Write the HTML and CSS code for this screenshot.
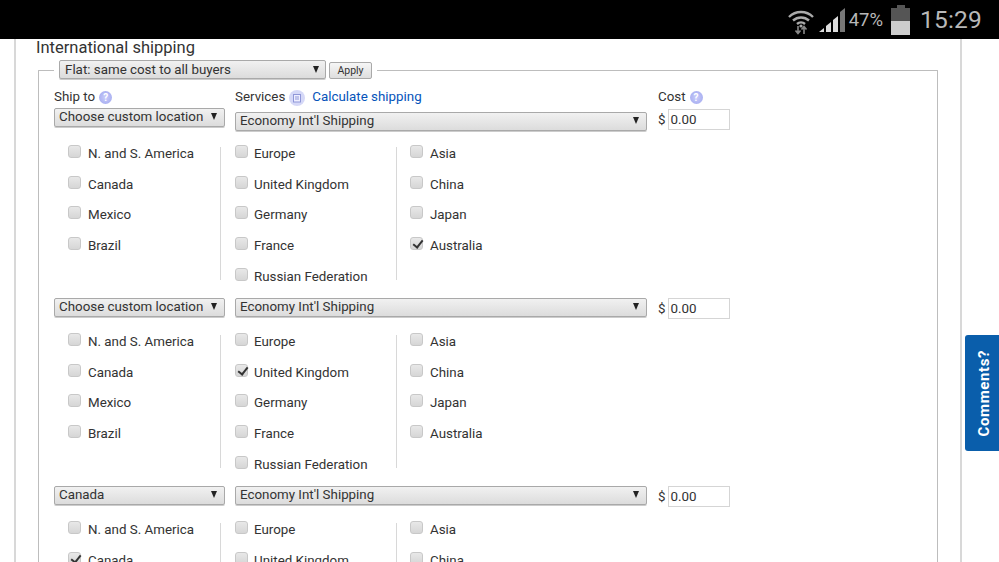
FILE: index.html
```html
<!DOCTYPE html>
<html lang="en">
<head>
<meta charset="utf-8">
<title>International shipping</title>
<link rel="stylesheet" href="styles.css">
</head>
<body>
<header class="status">
  <svg class="wifi" width="28" height="30" viewBox="0 0 28 30">
    <path d="M2 11 A17 17 0 0 1 26 11" class="arc"/>
    <path d="M6 14.5 A12 12 0 0 1 22 14.5" class="arc"/>
    <path d="M10 18 A6 6 0 0 1 18 18" class="arc"/>
    <circle cx="14" cy="20" r="1.6" fill="#aaa"/>
    <path d="M11 20v7M8.5 24.5L11 27.5L13.500 24.500M17 28v-7M14.500 23.500L17 20.500L19.500 23.500" class="arrows"/>
  </svg>
  <svg class="signal" width="26" height="26" viewBox="0 0 26 26">
    <path d="M0 25l5-4v4z" fill="#ddd"/>
    <path d="M7 25v-6l5-4v10z" fill="#ddd"/>
    <path d="M14 25v-12l5-4v16z" fill="#ddd"/>
    <path d="M21 25v-20l5-4v24z" fill="#777"/>
  </svg>
  <span class="pct">47%</span>
  <svg class="batt" width="20" height="30" viewBox="0 0 20 30">
    <path d="M6 0h8v3h5v13h-19v-13h6z" fill="#555"/>
    <rect y="16" width="19" height="14" fill="#ccc"/>
  </svg>
  <span class="time">15:29</span>
</header>

<main class="page">
  <h2 class="title">International shipping</h2>
  <section class="box">
    <div class="legend">
      <div class="sel sel-flat"><span>Flat: same cost to all buyers</span><i class="arrow"></i></div>
      <button class="apply" type="button">Apply</button>
    </div>

    <div class="cols heads">
      <div class="head">Ship to <span class="help">?</span></div>
      <div class="head">Services
        <svg class="calc" width="16" height="16" viewBox="0 0 16 16"><circle cx="8" cy="8" r="8" fill="#d5d8f7"/><rect x="4.500" y="4.500" width="7" height="7.500" fill="#eef" stroke="#8f97d8"/><path d="M6 7h4M6 9h4" stroke="#8f97d8"/></svg>
        <a class="link">Calculate shipping</a></div>
      <div class="head">Cost <span class="help">?</span></div>
    </div>

    <div class="cols controls first">
      <div class="sel sel-loc"><span>Choose custom location</span><i class="arrow"></i></div>
      <div class="sel sel-svc"><span>Economy Int'l Shipping</span><i class="arrow"></i></div>
      <div class="cost">$ <span class="input">0.00</span></div>
    </div>
    <div class="regions">
      <div class="region r1">
        <label class="opt"><i class="cb"></i>N. and S. America</label>
        <label class="opt"><i class="cb"></i>Canada</label>
        <label class="opt"><i class="cb"></i>Mexico</label>
        <label class="opt"><i class="cb"></i>Brazil</label>
      </div>
      <div class="region r2">
        <label class="opt"><i class="cb"></i>Europe</label>
        <label class="opt"><i class="cb"></i>United Kingdom</label>
        <label class="opt"><i class="cb"></i>Germany</label>
        <label class="opt"><i class="cb"></i>France</label>
        <label class="opt"><i class="cb"></i>Russian Federation</label>
      </div>
      <div class="region r3">
        <label class="opt"><i class="cb"></i>Asia</label>
        <label class="opt"><i class="cb"></i>China</label>
        <label class="opt"><i class="cb"></i>Japan</label>
        <label class="opt"><i class="cb on"></i>Australia</label>
      </div>
    </div>

    <div class="cols controls">
      <div class="sel sel-loc"><span>Choose custom location</span><i class="arrow"></i></div>
      <div class="sel sel-svc"><span>Economy Int'l Shipping</span><i class="arrow"></i></div>
      <div class="cost">$ <span class="input">0.00</span></div>
    </div>
    <div class="regions">
      <div class="region r1">
        <label class="opt"><i class="cb"></i>N. and S. America</label>
        <label class="opt"><i class="cb"></i>Canada</label>
        <label class="opt"><i class="cb"></i>Mexico</label>
        <label class="opt"><i class="cb"></i>Brazil</label>
      </div>
      <div class="region r2">
        <label class="opt"><i class="cb"></i>Europe</label>
        <label class="opt"><i class="cb on"></i>United Kingdom</label>
        <label class="opt"><i class="cb"></i>Germany</label>
        <label class="opt"><i class="cb"></i>France</label>
        <label class="opt"><i class="cb"></i>Russian Federation</label>
      </div>
      <div class="region r3">
        <label class="opt"><i class="cb"></i>Asia</label>
        <label class="opt"><i class="cb"></i>China</label>
        <label class="opt"><i class="cb"></i>Japan</label>
        <label class="opt"><i class="cb"></i>Australia</label>
      </div>
    </div>

    <div class="cols controls">
      <div class="sel sel-loc"><span>Canada</span><i class="arrow"></i></div>
      <div class="sel sel-svc"><span>Economy Int'l Shipping</span><i class="arrow"></i></div>
      <div class="cost">$ <span class="input">0.00</span></div>
    </div>
    <div class="regions">
      <div class="region r1">
        <label class="opt"><i class="cb"></i>N. and S. America</label>
        <label class="opt"><i class="cb on"></i>Canada</label>
        <label class="opt"><i class="cb"></i>Mexico</label>
        <label class="opt"><i class="cb"></i>Brazil</label>
      </div>
      <div class="region r2">
        <label class="opt"><i class="cb"></i>Europe</label>
        <label class="opt"><i class="cb"></i>United Kingdom</label>
        <label class="opt"><i class="cb"></i>Germany</label>
        <label class="opt"><i class="cb"></i>France</label>
        <label class="opt"><i class="cb"></i>Russian Federation</label>
      </div>
      <div class="region r3">
        <label class="opt"><i class="cb"></i>Asia</label>
        <label class="opt"><i class="cb"></i>China</label>
        <label class="opt"><i class="cb"></i>Japan</label>
        <label class="opt"><i class="cb"></i>Australia</label>
      </div>
    </div>
  </section>
</main>

<aside class="comments"><span>Comments?</span></aside>
</body>
</html>
```

FILE: styles.css
```css
* { box-sizing: border-box; }
html, body { margin: 0; height: 562px; overflow: hidden; background: #fff; }
body { font-family: Roboto, "Liberation Sans", sans-serif; font-size: 13.35px; color: #333; }

.status { height: 39px; background: #000; display: flex; align-items: center; justify-content: flex-end; padding-right: 17px; color: #b8b8b8; }
.arc { fill: none; stroke: #aaa; stroke-width: 2.4; }
.arrows { fill: none; stroke: #888; stroke-width: 1.6; }
.wifi { margin-right: 4px; margin-top: 2px; }
.signal { margin-right: 4px; margin-top: 1px; }
.pct { font-size: 18.5px; margin-right: 8px; margin-top: 1px; }
.batt { margin-right: 9px; margin-top: 1px; }
.time { font-size: 24.5px; letter-spacing: 0.2px; }

.page { margin: 0 37px 0 14px; width: 948px; height: 523px; border-left: 2px solid #d8d8d8; border-right: 2px solid #d8d8d8; padding: 0 22px; }
.title { margin: 0 0 0 -2px; font-size: 16.5px; font-weight: 400; height: 23px; line-height: 18px; color: #333; }

.box { position: relative; border: 1px solid #bdbdbd; border-bottom: 0; width: 900px; margin-top: 8px; height: 500px; padding: 0 15px; border-radius: 1px; }
.legend { position: absolute; left: 15px; top: -11px; display: flex; align-items: flex-start; gap: 3px; background: #fff; padding: 0 5px; }

.sel { display: flex; justify-content: space-between; align-items: center; border: 1px solid #a9a9a9; border-radius: 2px; background: linear-gradient(#f1f1f1, #dcdcdc); color: #333; white-space: nowrap; box-shadow: 0 1px 0 #ccc; padding-bottom: 1px; }
.sel span { display: block; }
.arrow { width: 0; height: 0; border-left: 3.5px solid transparent; border-right: 3.5px solid transparent; border-top: 7px solid #222; }
.sel-flat { width: 267px; height: 19px; padding-left: 5px; padding-right: 6px; }
.apply { width: 43px; height: 17px; margin-top: 2px; border: 1px solid #a9a9a9; border-radius: 2px; background: linear-gradient(#f6f6f6, #dedede); font: 10.5px Roboto, "Liberation Sans", sans-serif; color: #333; padding: 0; }

.cols { display: grid; grid-template-columns: 171px 413px 90px; column-gap: 10px; }
.heads { padding-top: 16.5px; height: 36.5px; }
.head { line-height: 18px; display: flex; align-items: center; gap: 4px; height: 18px; }
.help { display: inline-block; width: 13px; height: 13px; border-radius: 50%; background: radial-gradient(#c9ccfa, #9ea6ee); color: #fff; font-size: 10px; line-height: 13px; text-align: center; font-weight: 700; margin-top: 2px; }
.calc { margin: 2px 3px 0 0; }
.link { color: #0654ba; }

.controls { height: 24px; align-items: start; }
.controls.first { height: 24.5px; }
.sel-loc { height: 19px; margin-top: 1.5px; padding-left: 4px; padding-right: 7px; width: 171px; }
.sel-svc { height: 19px; margin-top: 1.5px; padding-left: 4px; padding-right: 7px; width: 412px; }
.cost { margin-top: 1.5px; white-space: nowrap; display: flex; align-items: center; gap: 2px; }
.first .sel-loc { margin-top: 0; }
.first .sel-svc { margin-top: 4px; }
.first .cost { margin-top: 1px; }
.input { display: block; width: 62px; height: 21px; border: 1px solid #d5d5d5; padding-left: 2px; line-height: 19px; color: #333; }

.regions { display: flex; height: 164px; padding-top: 15px; }
.region { height: 133px; }
.r1 { width: 167px; padding-left: 14px; border-right: 1px solid #d8d8d8; }
.r2 { width: 176px; padding-left: 14px; border-right: 1px solid #d8d8d8; }
.r3 { width: 176px; padding-left: 13px; }
.opt { display: flex; align-items: flex-start; height: 30.7px; line-height: 18px; color: #333; white-space: nowrap; }
.opt:first-child { margin-top: -2.2px; }

.cb { position: relative; flex: none; width: 13px; height: 13px; margin: 0 6px 0 0; border: 1px solid #c8c8c8; border-radius: 3px; background: linear-gradient(#e8e8e8, #d6d6d6); }
.r1 .cb, .r3 .cb { margin-right: 7px; }
.cb.on::after { content: ""; position: absolute; left: 3.5px; top: 0; width: 4px; height: 8px; border: solid #333; border-width: 0 2px 2px 0; transform: rotate(38deg); }

.comments { position: fixed; right: 0; top: 335px; width: 34px; height: 116px; padding-left: 3px; background: #0a5eab; border-radius: 3px 0 0 3px; display: flex; align-items: center; justify-content: center; }
.comments span { color: #fff; font: 700 15px Roboto, "Liberation Sans", sans-serif; letter-spacing: 0.6px; writing-mode: vertical-rl; transform: rotate(180deg); }
```
